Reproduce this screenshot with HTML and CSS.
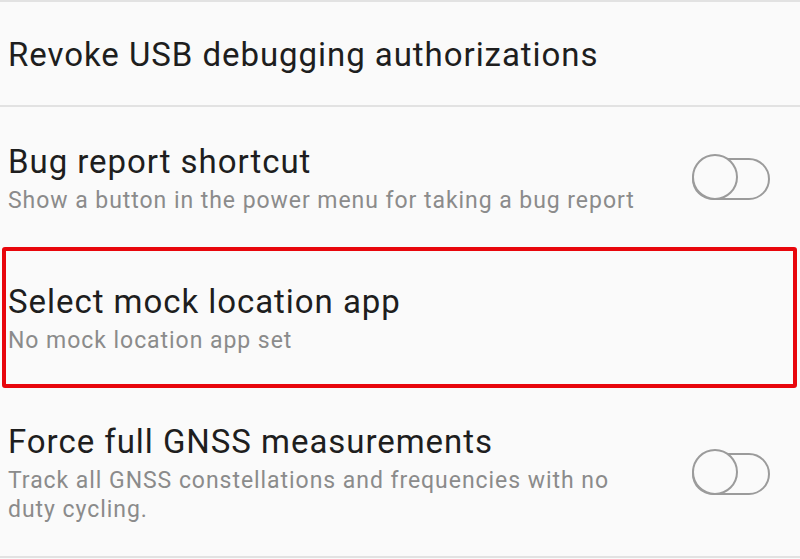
FILE: index.html
```html
<!DOCTYPE html>
<html>
<head>
<meta charset="utf-8">
<link rel="stylesheet" href="styles.css">
</head>
<body>
<div class="screen">
  <div class="divider"></div>
  <div class="row row-single">
    <div class="text">
      <div class="title">Revoke USB debugging authorizations</div>
    </div>
  </div>
  <div class="divider"></div>
  <div class="row">
    <div class="text">
      <div class="title">Bug report shortcut</div>
      <div class="summary">Show a button in the power menu for taking a bug report</div>
    </div>
    <div class="switch"><div class="thumb"></div></div>
  </div>
  <div class="row highlighted">
    <div class="text">
      <div class="title">Select mock location app</div>
      <div class="summary">No mock location app set</div>
    </div>
    <div class="highlight-box"></div>
  </div>
  <div class="row">
    <div class="text">
      <div class="title">Force full GNSS measurements</div>
      <div class="summary">Track all GNSS constellations and frequencies with no duty cycling.</div>
    </div>
    <div class="switch"><div class="thumb"></div></div>
  </div>
  <div class="divider"></div>
</div>
</body>
</html>
```
FILE: styles.css
```css
html, body {
  margin: 0;
  padding: 0;
  background: #fafafa;
}
.screen {
  width: 800px;
  height: 559px;
  overflow: hidden;
  background: #fafafa;
  font-family: Roboto, "Noto Sans", sans-serif;
  display: flex;
  flex-direction: column;
}
.divider {
  height: 2px;
  background: #e2e2e2;
  flex: none;
}
.row {
  position: relative;
  display: flex;
  align-items: center;
  padding: 36px 30px 32px 8px;
  flex: none;
}
.row-single {
  padding-top: 34px;
  padding-bottom: 32px;
}
.text {
  flex: 1;
  min-width: 0;
  padding-right: 42px;
}
.title {
  font-size: 33px;
  line-height: 37px;
  letter-spacing: 0.95px;
  color: #1e1e1e;
  white-space: nowrap;
}
.summary {
  margin-top: 6px;
  font-size: 23px;
  line-height: 29px;
  letter-spacing: 0.95px;
  color: #8b8b8b;
}
.switch {
  position: relative;
  flex: none;
  width: 74px;
  height: 38px;
  border: 2px solid #9b9b9b;
  border-radius: 21px;
}
.thumb {
  position: absolute;
  left: -2px;
  top: -6px;
  width: 42px;
  height: 42px;
  border: 2px solid #9b9b9b;
  border-radius: 50%;
  background: #fafafa;
}
.highlight-box {
  position: absolute;
  left: 2px;
  top: 0;
  right: 3px;
  bottom: -1px;
  border: 4px solid #e8060c;
  border-radius: 3px;
  pointer-events: none;
}
```
